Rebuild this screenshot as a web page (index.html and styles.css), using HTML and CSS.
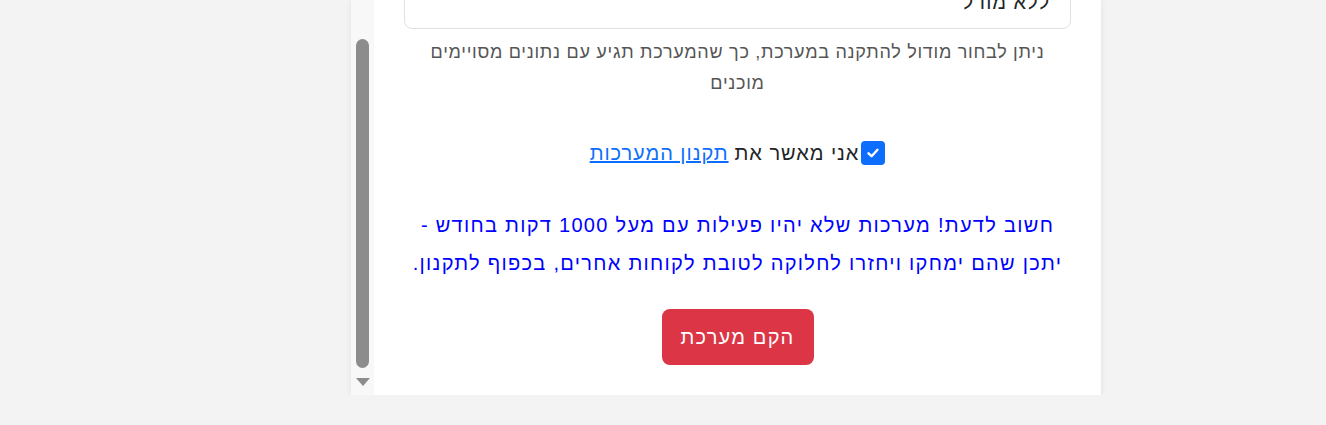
FILE: index.html
```html
<!DOCTYPE html>
<html lang="he" dir="rtl">
<head>
<meta charset="UTF-8">
<meta name="viewport" content="width=device-width, initial-scale=1.0">
<title>הקמת מערכת</title>
<link rel="stylesheet" href="styles.css">
</head>
<body>
<div class="card">
    <div class="content">
        <div class="model-select">ללא מודל</div>
        <p class="help">ניתן לבחור מודול להתקנה במערכת, כך שהמערכת תגיע עם נתונים מסויימים מוכנים</p>

        <label class="agree">
            <span class="check">
                <svg width="14" height="14" viewBox="0 0 14 14"><path d="M2.5 7.3 L5.6 10.2 L11.5 3.8" fill="none" stroke="#fff" stroke-width="2.4" stroke-linecap="round" stroke-linejoin="round"/></svg>
            </span>אני מאשר את <a href="#">תקנון המערכות</a>
        </label>

        <p class="notice">חשוב לדעת! מערכות שלא יהיו פעילות עם מעל 1000 דקות בחודש - יתכן שהם ימחקו ויחזרו לחלוקה לטובת לקוחות אחרים, בכפוף לתקנון.</p>

        <div class="actions">
            <button type="button">הקם מערכת</button>
        </div>
    </div>
    <div class="scrollbar">
        <div class="thumb"></div>
        <div class="arrow"></div>
    </div>
</div>
</body>
</html>
```

FILE: styles.css
```css
body {
    font-family: "Liberation Sans", Arial, sans-serif;
    margin: 0;
    padding: 0;
    background-color: #f3f3f3;
    letter-spacing: 0.06em;
}

.card {
    width: 750px;
    height: 395px;
    margin-left: 351px;
    margin-right: auto;
    display: flex;
    background-color: #fff;
    box-shadow: 0 0 6px rgba(0, 0, 0, 0.08);
}

.content {
    flex: 1;
    display: flex;
    flex-direction: column;
    justify-content: flex-end;
    overflow: hidden;
    padding: 0 30px 30px;
}

.model-select {
    flex-shrink: 0;
    height: 54px;
    box-sizing: border-box;
    border: 1px solid #dee2e6;
    border-radius: 8px;
    padding: 0 20px;
    font-size: 20px;
    line-height: 20px;
    color: #212529;
    display: flex;
    align-items: center;
}

.help {
    margin: 8px 0 0;
    text-align: center;
    color: #555;
    font-size: 18px;
    line-height: 31px;
    letter-spacing: 0.04em;
}

.agree {
    margin-top: 39px;
    display: flex;
    justify-content: center;
    align-items: center;
    font-size: 20px;
    line-height: 30px;
    color: #212529;
}

.check {
    width: 24px;
    height: 24px;
    border-radius: 4px;
    background-color: #0d6efd;
    display: inline-flex;
    align-items: center;
    justify-content: center;
    margin-left: 2px;
}

.agree a {
    color: #0d6efd;
    margin-right: 6px;
}

.notice {
    margin: 38px 0 0;
    text-align: center;
    color: #0000ff;
    font-size: 20px;
    line-height: 38px;
    letter-spacing: 0.065em;
}

.actions {
    margin-top: 27px;
    display: flex;
    justify-content: center;
}

button {
    height: 56px;
    padding: 0 19px;
    background-color: #dc3545;
    color: #fff;
    border: none;
    border-radius: 8px;
    font-family: inherit;
    font-size: 20px;
    letter-spacing: 0.06em;
    cursor: pointer;
}

.scrollbar {
    width: 23px;
    background-color: #f8f8f8;
    display: flex;
    flex-direction: column;
    align-items: center;
}

.thumb {
    margin-top: 39px;
    width: 13px;
    height: 329px;
    border-radius: 7px;
    background-color: #8c8c8c;
}

.arrow {
    margin-top: 10px;
    width: 0;
    height: 0;
    border-left: 7px solid transparent;
    border-right: 7px solid transparent;
    border-top: 8px solid #8c8c8c;
}
```
